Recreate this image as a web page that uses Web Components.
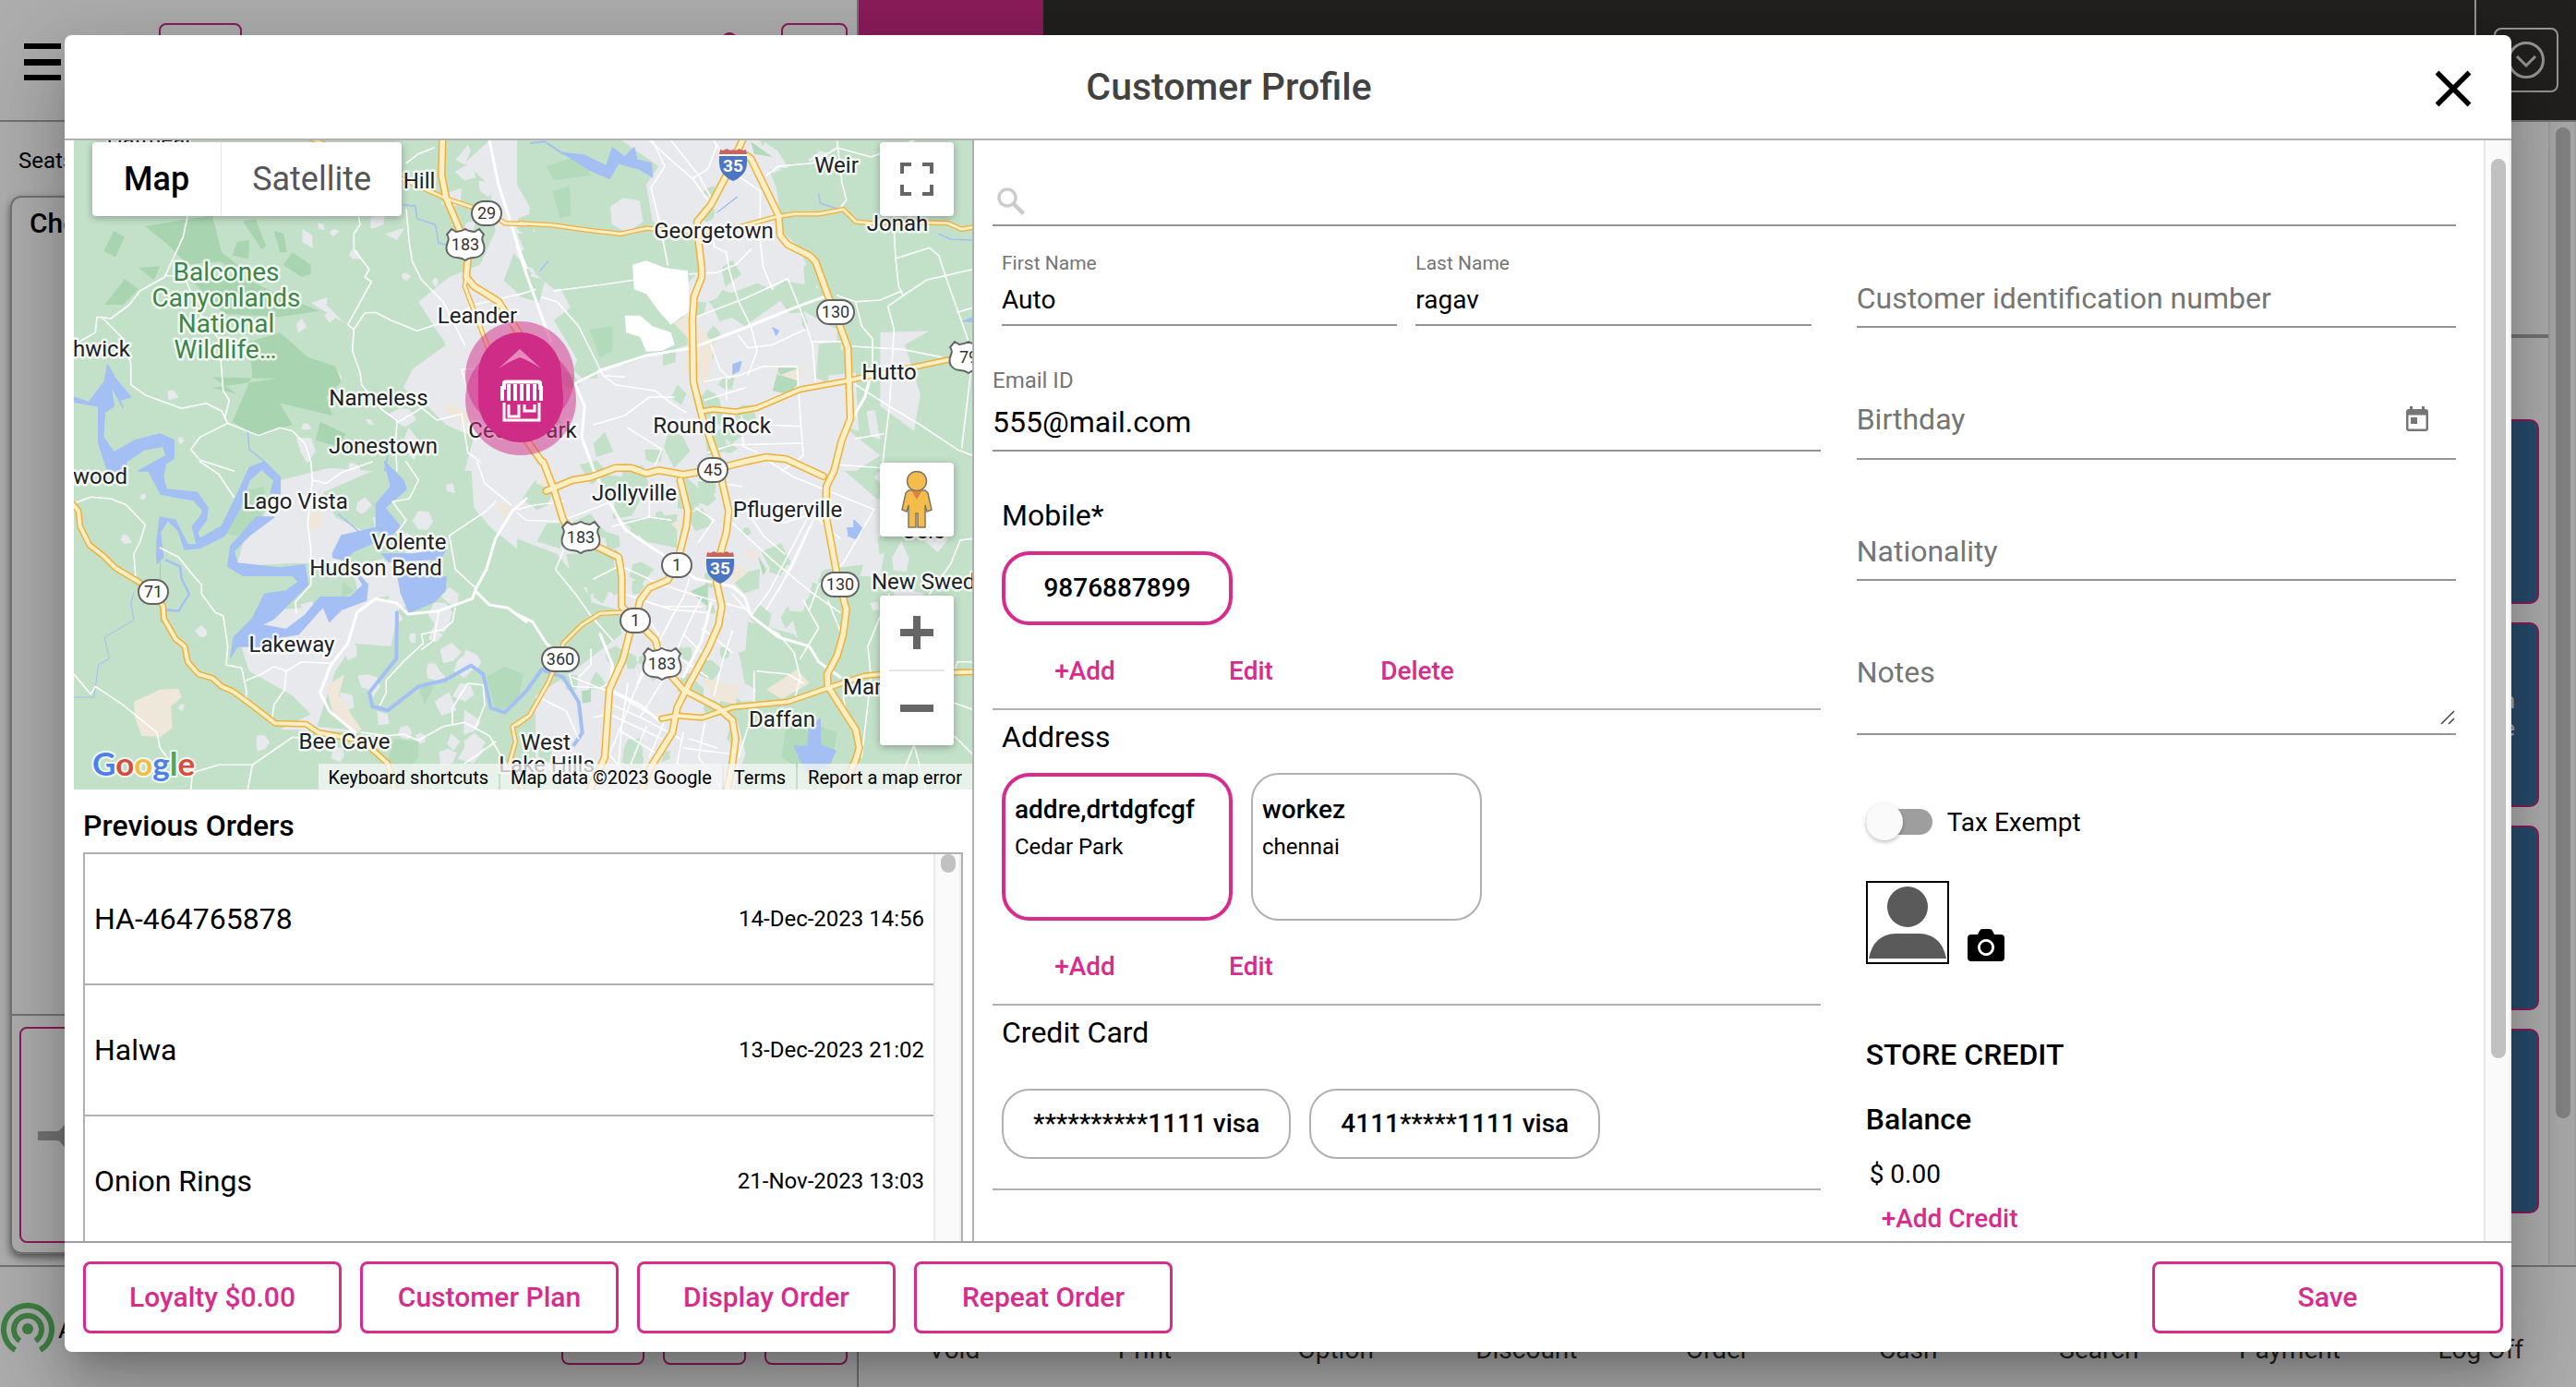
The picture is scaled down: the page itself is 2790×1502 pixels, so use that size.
<!DOCTYPE html>
<html lang="en">
<head>
<meta charset="utf-8">
<title>Customer Profile</title>
<style>
html,body{margin:0;height:100%}
body{font-family:Roboto,"Liberation Sans",sans-serif;font-size:28px;color:#000;background:#fff;overflow:hidden;
 --pink:#d92b8c;--line:#b0b0b0;--field:#949494;--muted:#757575}
</style>
</head>
<body>
<pos-screen>
  <pos-shell></pos-shell>
  <customer-dialog slot="dialog"></customer-dialog>
</pos-screen>
<script>
function define(name, css, html){
  customElements.define(name, class extends HTMLElement{
    connectedCallback(){
      if(this.shadowRoot) return;
      const root=this.attachShadow({mode:'open'});
      const t=document.createElement('template');
      t.innerHTML='<style>*{box-sizing:border-box}button,input,textarea{font:inherit;color:inherit;margin:0;padding:0;border:0;background:none;outline:0}button{cursor:pointer}'+css+'</style>'+(typeof html==='function'?html(this):html);
      root.appendChild(t.content.cloneNode(true));
    }
  });
}

define('pos-screen',`
:host{display:grid;height:100vh;overflow:hidden}
.page,.overlay{grid-area:1/1;min-width:0;min-height:0}
.overlay{z-index:1;background:rgba(0,0,0,.32);display:flex;padding:38px 70px}
::slotted(customer-dialog){flex:1}
`,`<div class="page" style="display:grid"><slot></slot></div><div class="overlay"><slot name="dialog"></slot></div>`);

define('blue-tile',`
:host{display:flex;justify-content:flex-end;align-items:center;width:300px;height:200px;flex:none;background:#3c70a0;border:2px solid #cc2a87;border-radius:10px;color:#fff;padding-right:24px;font-size:24px;line-height:30px;text-align:right}
`,`<slot></slot>`);

define('scroll-bar',`
:host{display:block;width:30px;flex:none;background:#fafafa;border-left:2px solid #e8e8e8;border-right:2px solid #ededed;padding:var(--top,0) 4px 0 6px}
i{display:block;width:16px;height:var(--size,100%);border-radius:8px;background:#c1c1c1}
`,`<i></i>`);

define('pos-shell',`
:host{display:grid;grid-template:132px 1fr 132px / 1fr 2fr;background:#fff;min-height:0;overflow:hidden}
.hl{display:flex;align-items:flex-start;padding:25px 10px 0 26px;border-bottom:2px solid #aaa;border-right:2px solid #aaa}
.burger{width:40px;height:40px;margin:22px 106px 0 0;border-top:6px solid #000;border-bottom:6px solid #000;display:flex;align-items:center}
.burger:before{content:"";height:7px;width:100%;background:#000}
.box{border:2px solid #cc2a87;border-radius:8px;height:80px;width:90px}
.box.s{width:72px;margin-left:48px}
.dot{width:16px;height:16px;border-radius:8px;background:#cc2a87;margin:10px 0 0 auto}
.hr{background:#32302e;display:flex;justify-content:space-between;border-bottom:2px solid #aaa}
.hr .tab{width:200px;background:#cc2a87}
.hr .end{width:110px;border-left:2px solid #ddd;padding:30px 0 0 19px}
.hr button{width:70px;height:70px;border:2px solid #ddd;border-radius:8px;display:grid;place-items:center}
.ml{padding:22px 0 12px 11px;display:flex;flex-direction:column;min-height:0}
.ml p{margin:0 0 18px 9px;font-size:24px;line-height:40px}
.card{flex:1;border:2px solid #aaa;border-radius:12px;box-shadow:0 4px 8px rgba(0,0,0,.5);display:flex;flex-direction:column}
.card h2{margin:8px 0 0 19px;font-size:30px;font-weight:500;line-height:40px}
.tray{margin-top:auto;border-top:2px solid #aaa;padding:12px 8px;height:258px}
.tray div{height:234px;width:400px;border:2px solid #cc2a87;border-radius:8px;padding:97px 18px}
.mr{display:flex;justify-content:flex-end;min-height:0}
.tiles{flex:1;display:flex;flex-direction:column;align-items:flex-end;gap:20px;padding-right:10px;min-height:0;overflow:hidden}
.rule{height:4px;flex:none;align-self:stretch;background:#aaa;margin:230px -10px 68px 0}
.fl{border-top:2px solid #aaa;border-right:2px solid #aaa;display:flex;align-items:flex-start;gap:20px;padding:0 10px 0 1px}
.fl .sig{margin-top:38px;display:flex;align-items:center;gap:4px;margin-right:auto}
.fl .box{width:90px;height:82px;margin-top:24px}
.fr{border-top:2px solid #aaa;display:grid;grid-template-columns:repeat(9,1fr);text-align:center;line-height:36px;padding-top:72px;color:#333}
`,`
<div class="hl"><span class="burger"></span><span class="box"></span><span class="dot"></span><span class="box s"></span></div>
<div class="hr"><span class="tab"></span><span class="end"><button aria-label="More"><svg width="42" height="42" viewBox="0 0 42 42" fill="none" stroke="#ddd" stroke-width="3"><circle cx="21" cy="21" r="18.500"/><path d="M11 17l10 10 10-10"/></svg></button></span></div>
<div class="ml"><p>Seats</p><section class="card"><h2>Check</h2><div class="tray"><div><svg width="60" height="40" viewBox="0 0 60 40" fill="#aaa"><path d="M0 14h20q4 0 8-6l8-8h10v36H34q-6-6-8-8-2-4-6-4H0z"/></svg></div></div></section></div>
<div class="mr"><div class="tiles"><span class="rule"></span><blue-tile></blue-tile><blue-tile>n<br>e</blue-tile><blue-tile></blue-tile><blue-tile></blue-tile></div><scroll-bar style="--top:6px;--size:1073px"></scroll-bar></div>
<div class="fl"><span class="sig"><svg width="58" height="58" viewBox="0 0 58 58" fill="none" stroke="#5dbb63" stroke-width="6"><circle cx="29" cy="29" r="6" fill="#5dbb63" stroke="none"/><path d="M20.500 42A15 15 0 1 1 37.500 42M15.500 52A26 26 0 1 1 42.500 52"/></svg>A</span><span class="box"></span><span class="box"></span><span class="box"></span></div>
<div class="fr"><span>Void</span><span>Print</span><span>Option</span><span>Discount</span><span>Order</span><span>Cash</span><span>Search</span><span>Payment</span><span>Log Off</span></div>
`);

/* ---- Map drawing. Survey sheets 1-4 are three times map scale; [sheet, points] lists are moved onto one plane. ---- */
const SHEET={1:[70,140],2:[560,140],3:[70,500],4:[560,500]};
function trace(s){
  return s.split('|').map(part=>{
    let d='',first=true,o=SHEET[1];
    for(const tok of part.trim().split(/\s+/)){
      if(/^\d:$/.test(tok)){o=SHEET[tok[0]];continue}
      const [x,y]=tok.split(',').map(Number);
      d+=(first?'M':'L')+(o[0]+x/3).toFixed(1)+' '+(o[1]+y/3).toFixed(1);first=false;
    }
    return d;
  }).join('');
}
const area=(s,fill,w)=>`<path fill="${fill}" ${w?`stroke="${fill}" stroke-width="${w}" stroke-linejoin="round"`:''} d="${trace(s.replace(/\|/g,'|'))}"/>`;
const line=(s,c,w)=>`<path fill="none" stroke="${c}" stroke-width="${w}" stroke-linecap="round" stroke-linejoin="round" d="${trace(s)}"/>`;
let seed=7;const rnd=()=>(seed=(seed*16807)%2147483647)/2147483647;
function patches(n,x,y,w,h,size,fill){
  let d='';
  for(let i=0;i<n;i++){
    const cx=x+rnd()*w,cy=y+rnd()*h,r=size*(.5+rnd()),k=4+Math.floor(rnd()*3),a0=rnd()*6;
    for(let j=0;j<k;j++){const a=a0+j*6.283/k,q=r*(.5+rnd()*.7);d+=(j?'L':'M')+(cx+Math.cos(a)*q).toFixed(1)+' '+(cy+Math.sin(a)*q*1.1).toFixed(1)}
    d+='Z';
  }
  return `<path fill="${fill}" d="${d}"/>`;
}
const G='#c3e1c9',U='#e8e9ed',D='#a9d4b0',W='#a3bff4',B='#efe7d9';
function mapArt(){
  let s='';
  s+=area('1: 1380,36 1300,110 1380,180 1400,330 1350,440 1250,480 1150,560 1200,640 1240,700 1130,780 1100,840 1180,900 1240,960 1330,1000 1300,1110 2: 100,1110 560,1110 560,940 430,880 340,760 240,700 120,480 60,340 40,250 0,180 0,36',U);
  s+=area('2: 340,36 790,36 830,160 900,330 940,440 830,520 900,620 980,700 970,820 1090,860 1080,980 1180,1060 1100,1110 300,1110 200,820 420,740 560,700 520,520 600,450 570,340 440,300 420,180 460,120',U);
  s+=area('3: 1320,0 1500,0 4: 1030,0 1180,130 1160,330 1000,350 880,440 900,560 720,620 740,720 880,800 760,900 700,1070 180,1070 60,960 60,760 170,690 340,560 330,480 130,430 0,300 3: 1480,290 1390,220 1330,150',U);
  s+=area('3: 700,60 860,20 1000,30 840,100 880,180 1000,240 900,330 740,330 560,340 580,260 640,190|3: 560,560 700,480 860,470 990,440 1090,460 1060,600 940,590 880,680 820,860 1000,880 700,870 800,820 740,760 600,680|3: 930,330 1080,320 1100,430 960,450',U);
  s+=patches(34,640,170,400,260,13,U)+patches(36,620,430,420,270,14,U)+patches(34,330,400,180,290,10,U)+patches(24,340,690,180,130,10,U)+patches(16,320,180,210,200,9,U)+patches(8,90,420,220,400,6,U);
  s+=patches(14,700,180,110,300,12,G)+patches(22,580,400,220,180,14,G)+patches(20,560,700,240,130,10,G)+patches(12,560,190,90,150,16,G)+patches(20,740,560,150,240,11,G)+patches(14,620,560,80,100,10,G);
  s+=area('2: 0,340 100,330 330,345 560,340 560,420 440,460 300,500 120,520 60,470|2: 200,560 340,600 420,740 220,790 120,620|2: 620,560 780,500 880,540 740,640|2: 840,160 1100,36 1480,36 1480,1110 1200,1110 1160,900 1050,690 980,520 930,400 860,330|4: 160,300 310,290 330,430 180,400|4: 340,190 520,170 520,280 420,260|4: 750,520 900,560 1000,700 820,740 740,640|4: 700,780 1000,770 1060,880 1010,1070 780,1070 740,940|4: 0,250 130,300 240,440 250,600 60,660 0,700',G);
  s+=area('2: 1180,660 1340,655 1260,700 1310,860 1290,980 1180,900|2: 1010,800 1100,790 1110,980 1040,960|2: 930,590 1040,650 1040,690 970,700|4: 1170,230 1180,330 1120,300|2: 900,430 920,420 915,470|1: 1270,100 1310,50 1320,70 1300,115|1: 1410,115 1450,105 1465,130 1450,170 1415,175|1: 1040,340 1105,320 1080,360|1: 800,565 855,545 850,570 910,630',U);
  s+=area('1: 260,315 480,280 510,400 600,470 500,430 400,440 330,370|1: 160,330 195,350 165,415 127,395|1: 580,300 620,290 655,380 640,390|1: 680,330 712,340 722,400 700,400|1: 740,400 800,440 800,470 770,480 710,440|1: 195,487 240,520 190,570 130,570|1: 545,410 560,365 600,360 598,420|1: 420,500 560,470 700,540 830,590 700,610 520,600|1: 600,690 700,660 790,740 880,770 900,820 850,870 870,930 700,890 740,960 690,975 630,1000 545,950 610,800|1: 690,810 480,805 560,860 480,840|1: 830,950 915,990 885,1030 815,1010|1: 240,450 310,445 290,490',D);
  s+=area('2: 95,120 200,85 240,150 120,165|2: 115,200 170,185 175,280 140,290|2: 235,650 310,640 310,720 270,740|2: 760,40 830,90 770,80|2: 850,775 910,775 910,830 880,860 830,850|4: 565,420 620,395 620,470 600,455|4: 210,745 240,740 240,780 212,785|3: 560,100 650,80 640,190 560,240 500,230|3: 1370,700 1430,665 1490,690 1470,790 1400,810|3: 1070,900 1150,910 1150,960 1110,1010 1050,970|3: 905,390 940,420 900,440|4: 880,820 1040,880 1010,1060 860,960|4: 780,300 810,350 800,370|3: 1150,730 1200,730 1170,790','#b2dabb');
  s+=area('3: 225,780 310,740 370,738 380,765 345,795 350,865 310,895 250,890 228,830|3: 850,730 910,690 890,760 965,870 940,880 870,810|3: 790,165 838,165 830,220 790,215|2: 510,630 560,600 640,700 620,830 590,820 545,790 555,680|4: 810,740 910,675 950,720 860,770|4: 600,700 720,730 710,790 640,770|4: 700,320 750,360 700,400|4: 740,270 790,310 760,320|2: 830,770 850,800 930,770 920,820 860,800|4: 60,70 130,20 110,90|4: 500,200 560,180 550,250|1: 1250,890 1320,930 1300,960 1230,910|3: 1400,130 1450,150 1430,190',B);
  s+=area('2: 375,440 420,427 480,450 555,460 560,590 500,635 460,590 420,535 380,520|2: 350,605 400,605 440,640 500,660 512,700 470,720 420,722 400,675 355,660','#fff');
  /* lakes and creeks */
  s+=area('1: 80,885 130,820 140,765 165,810 215,870 180,880 190,905 150,830 160,900 130,920 125,1000 160,1050 230,1010 310,990 355,1010 355,1070 290,1110 240,1110 330,1060 320,1030 260,1040 200,1080 200,1110 140,1110 110,1020 110,900 30,885 30,868|2: 140,75 220,85 290,120 310,60 350,90 380,60 390,100 435,110 440,155 400,130 330,110 300,160 230,130|3: 270,30 330,0 320,50 330,90 430,100 465,150 460,190 430,230 440,250 510,210 560,110 600,20 650,0 700,50 700,105 670,100 680,60 640,25 600,60 570,150 520,240 440,280 390,285 370,225 335,190 310,230 320,310 300,330 300,260 310,180 360,190 400,270 430,270 415,210 440,180 450,160 420,125 310,105|3: 620,180 680,180 600,240 550,290 560,330 700,345 780,335 790,400 740,450 680,510 640,530 720,545 780,500 830,440 930,440 970,400 940,350 985,400 980,450 900,480 860,520 840,470 760,560 700,570 640,600 560,600 540,635 550,570 610,510 650,430 720,420 760,390 740,370 580,370 530,340 540,270|3: 870,300 900,240 1010,215 1010,260 940,290 910,320 870,310|3: 1010,140 1060,80 1040,0 1100,60 1110,90 1040,150 1090,210 1060,240 1010,220|3: 1080,370 1240,375 1235,420 1200,455 1120,490 1090,420|3: 1030,300 1130,300 1240,285 1220,315 1050,325|4: 900,925 945,925 950,870 985,835 985,920 1035,940 1015,980 950,1010 915,960|4: 1072,215 1095,215 1095,190 1125,220 1100,250 1075,240|2: 700,765 728,755 720,785 700,795|2: 830,645 850,655 840,670|2: 1450,625 1480,612 1480,628',W,1.5);
  s+=line('3: 225,425 215,460 225,515 130,570 145,640 110,660 95,765 30,765',W,1)+line('3: 330,320 375,340 380,380 405,430 370,485 320,480',W,2.5)+line('3: 1080,490 1078,640 990,750 1000,795 1050,808 1150,730 1235,710 1320,662 1360,690 1385,800 1430,815 1500,745 4: 80,675 150,700 200,780 212,880 185,920',W,4)+line('3: 310,320 313,520',W,1)+line('2: 45,45 90,40 150,80',W,2)+line('2: 715,220 650,270|2: 75,460 100,430|2: 980,210 985,240 1060,265|2: 1370,340 1410,358 1480,360|1: 1100,245 1140,250 1145,290 1205,310 1215,370 1240,375|1: 595,980 600,1040 650,1080|1: 1040,1110 1050,1060|3: 890,170 960,230',W,1.5);
  /* minor roads */
  const minor=[
  '1: 400,280 385,350 325,480 245,525 210,570 150,615 105,610 100,660 30,700','1: 325,475 390,480 410,530 440,600 500,680 510,780 515,850 535,880 520,940','1: 120,610 190,680 215,760 215,830 265,865 380,907 460,890 510,915 530,955 630,995 700,970 740,980 780,1020 800,1080','1: 530,955 440,1000 410,1040 440,1075 550,1110','1: 955,280 960,310 940,340 940,390 990,455 975,480 997,495 920,635 940,650','1: 1110,260 1120,370 1130,430 1160,490 1230,560 1300,700','1: 940,650 935,720 960,790 965,830 1030,910 1085,950 1160,905 1210,945 1290,925 1310,1050 1350,1080','1: 940,650 975,597 1010,595 1060,620 1145,655 1250,620 1330,570 1500,530','1: 1500,770 1290,780 1310,850','1: 1080,950 1075,1020 1080,1110','1: 1110,110 1150,80 1200,60',
  '3: 440,0 500,40 550,115','3: 30,135 85,115 150,120 200,140 262,205 245,260 225,300 230,370','3: 310,280 370,310 410,360 445,400 445,430 475,470 490,490 515,500 530,600 525,660 575,670 590,740 590,780','3: 800,0 805,60 790,200 800,280 800,400 750,455 753,490','3: 805,60 850,70 900,35 1000,0','3: 590,710 640,690 680,665 720,680 770,650 860,655','3: 720,680 715,740 680,790 675,830','3: 30,690 85,755 100,730 190,790 300,880 310,930 340,970','3: 410,1065 415,1010 500,985 610,985 690,930 740,895 790,900','3: 595,1065 610,985','3: 965,880 1050,890 1100,885 1150,905 1230,860 1300,847 1380,890 1420,960 1450,1010','3: 1270,475 1260,520 1230,545 1160,560 1165,590 1100,650 1045,710 1045,750 1025,790','3: 1215,490 1200,580 1160,610','3: 1260,855 1260,800 1310,720 1360,725 1365,790 1335,865','3: 1335,410 1270,350 1250,240 1370,160 1400,130','3: 1110,0 1150,60 1120,120 1065,130 1110,190 1080,230','3: 1300,980 1400,910','3: 1340,0 1365,70 1450,140',
  '2: 440,36 480,120 435,190 460,290 490,440','2: 430,36 500,100 570,160 620,230','2: 500,36 590,150 640,240','2: 640,36 700,140 790,200 790,360 800,450 830,520','2: 570,160 620,130 650,50','2: 810,150 850,120 960,110 1040,60 1150,90 1290,36','2: 1040,40 1055,170 1070,230 1050,255','2: 1225,330 1230,420 1240,510 1255,540 1205,575 1225,650 1210,900 1185,1110','2: 1230,420 1340,385 1370,410 1400,500 1450,640 1470,700','2: 1255,540 1330,490 1480,455','2: 1100,560 1180,555 1250,525','2: 1430,595 1480,580','2: 640,320 640,380 680,400 690,460 720,560 760,640 780,720 750,800','2: 560,470 650,465 710,440 760,390','2: 580,610 740,550 880,485 930,610 960,700 970,820','2: 120,525 310,500 440,480','2: 80,545 130,560 200,640 240,720 280,800 350,805','2: 0,540 60,520','2: 280,800 320,830 450,850 500,890 550,920','2: 250,960 350,930 430,870 510,870','2: 360,970 470,1040 450,1090','2: 610,820 680,805 720,800 800,770 910,770 920,930 930,1060 860,1110','2: 680,805 680,880','2: 610,880 740,840','2: 630,700 660,780 690,810','2: 720,670 750,710 830,700 935,650','2: 730,930 735,1030 780,1050','2: 620,1050 700,1025 930,1020','2: 810,960 920,965','2: 1040,540 1100,560 1120,640 1155,680 1155,800','2: 960,690 1060,690','2: 1090,705 1250,715 1380,740','2: 1100,830 1210,900 1310,960 1430,1040 1480,1060','2: 1480,740 1445,1035','2: 1100,1005 1190,990','2: 1040,1090 1190,1100',
  '4: 0,155 60,140 150,130','4: 150,190 280,140 430,90','4: 0,165 30,190 150,195','4: 310,210 430,180 500,190','4: 150,290 125,350 190,430 240,500 310,580','4: 350,345 470,400 600,440 750,480','4: 250,380 330,340','4: 350,430 500,480 620,490','4: 380,440 470,470 600,470','4: 600,440 560,520 480,700 400,830','4: 510,490 380,750 350,830 300,950','4: 420,500 460,560 390,720','4: 560,380 540,440 430,640','4: 700,200 830,320 950,420 1050,490','4: 740,150 800,240 870,300','4: 750,130 860,200 960,170 1050,250','4: 820,0 900,50 1160,155','4: 940,190 820,420 760,500','4: 980,150 900,330 810,480','4: 950,210 850,420','4: 1160,155 1060,330 980,400 950,480','4: 700,430 780,520 850,560 900,620 920,700 900,780','4: 930,450 980,540 920,640','4: 700,550 670,640 640,760','4: 1010,450 1050,550','4: 770,680 770,800 720,960','4: 780,680 880,690 930,720','4: 1480,250 1440,255 1410,330 1340,430','4: 1210,430 1140,600 1150,700','4: 1060,760 1075,850','4: 1150,700 1120,960','4: 1410,780 1480,805','4: 1420,890 1480,950','4: 1290,920 1230,1070','4: 1290,920 1330,1070','4: 1425,670 1430,650 1480,650','4: 170,690 180,730 270,735 300,720','4: 240,610 240,660 200,700','4: 80,770 160,810 200,900','4: 360,720 340,860 330,980','4: 250,830 300,820 470,900','4: 310,790 420,840 530,900','4: 330,870 470,960','4: 420,860 370,980','4: 480,840 430,960','4: 540,880 520,980 600,1040','4: 560,900 650,930','4: 610,850 590,960 660,1060','4: 540,930 700,950','4: 300,950 380,1050','4: 180,700 330,760 450,830','4: 540,560 620,640','4: 470,600 620,700','4: 600,540 700,620','4: 580,150 640,190 590,260','4: 430,90 430,180','4: 590,60 730,80'];
  s+=minor.map(p=>line(p,'#fff',1.6)).join('');
  const mid=['1: 1380,36 1410,180 1445,290 1480,400 1500,450 2: 0,380 30,470 70,580 110,690','2: 190,825 280,780 420,735 570,710 740,645 900,580 1010,540','2: 190,830 220,900 210,1000 250,1110 4: 300,130 350,220 470,300 580,380 700,405 740,440 760,500 850,570 950,600 980,650 1050,700','3: 1500,120 1455,160 1400,250 1370,350 1335,415 1325,445 1215,485 1115,495 1080,460 1010,445 950,490 920,590 865,660 830,750 860,810 945,880','3: 1335,420 1380,465 1440,475 1500,520 4: 0,495 50,520 95,590 150,640','4: 630,460 600,580 540,700','2: 1155,780 1130,870 1090,940','4: 270,560 310,660 300,740 400,790 460,840'];
  s+=mid.map(p=>line(p,'#fff',3)).join('');
  /* highways */
  const narrow=['1: 1095,160 1240,225 1330,255 1390,275 1430,305 1500,308 2: 10,305 120,312 230,328 335,340 420,322 600,335 730,315 840,285 900,275 980,275 1060,260 1080,280 1100,300 1150,305 1250,300 1400,305 1445,325 1485,318','4: 340,490 270,493 210,530 150,590 135,640 100,720 40,825 0,855','3: 1500,830 1455,860 1465,910 1445,980 1490,1070','1: 1305,480 1300,510 1380,720','1: 800,30 850,50'];
  const wide=['2: 735,30 680,150 630,245 585,300 588,350 600,450 600,480 575,545 570,620 573,820 600,930 650,1070 4: 665,60 688,160 680,230 660,300 648,390 665,470 655,530 620,610 560,720 520,800 505,880 430,1000 400,1080','2: 745,85 760,95 850,280 855,345 880,375 950,410 970,430 1010,540 1035,600 1075,710 1083,940 1055,1010 1030,1110 4: 1005,80 1003,170 1040,370 1070,480 1060,560 1040,630 1008,690 1010,730 1100,870 1112,930 1100,970 1050,1080','1: 1228,30 1225,150 1240,225 1285,330 1310,420 1305,480 1330,510 1410,560 1500,700 2: 30,760 10,980 80,1080 4: 85,0 120,90 150,190 205,250 330,310 340,370 340,470 385,515 450,580 470,660 540,740 655,800 700,840 710,900 700,980 680,1080','2: 605,915 640,910 710,917 780,905 920,845 1060,820 1150,800 1300,770 1420,745','4: 95,95 180,60 240,50 320,20 370,20 420,38 460,28 540,42 640,25 740,0 810,-15 875,-8 995,47','4: 530,60 555,160 550,210 530,290 515,335 490,385 430,410 400,450 385,515 365,560 345,640 300,740 285,960 230,1080','4: 470,835 520,825 600,832 650,815 700,797 880,780 1010,735 1130,695 1190,690 1500,683','3: 20,130 45,160 50,210 80,270 130,310 165,345 240,390 300,440 320,470 323,510 360,575 390,600 400,650 435,690 480,703 510,730 545,745 600,785 685,850 785,853 825,880 960,905 1000,935 1050,980 1075,1080'];
  s+=narrow.map(p=>line(p,'#eeb03c',5.5)).join('')+wide.map((p,i)=>line(p,'#eeb03c',i===7||i===3||i===6?7:8.5)).join('');
  s+=narrow.map(p=>line(p,'#fdeec3',3)).join('')+wide.map((p,i)=>line(p,'#fdeec3',i===7||i===3||i===6?4:5.5)).join('');
  return s;
}
const pill=(x,y,w,t)=>`<g transform="translate(${x} ${y})"><rect x="${-w/2}" y="-13" width="${w}" height="26" rx="13" fill="#fff" stroke="#646464" stroke-width="2"/><text y="6" text-anchor="middle" class="n">${t}</text></g>`;
const us=(x,y,t)=>`<g transform="translate(${x} ${y})"><path d="M-15-16l5 3q5 0 10-3 5 3 10 3l5-3 5 6q-3 4-1 8 3 7 0 12-4 5-10 5-5 0-9 3-4-3-9-3-6 0-10-5-3-5 0-12 2-4-1-8z" fill="#fff" stroke="#646464" stroke-width="2"/><text y="7" text-anchor="middle" class="n">${t}</text></g>`;
const inter=(x,y)=>`<g transform="translate(${x} ${y})"><path d="M-14-16q4 2 7-1 4 3 7 1 3 2 7-1 3 3 7 1l1 5h-30z" fill="#c9635f"/><path d="M-15-9h30q1 14-4 19-4 5-11 8-7-3-11-8-5-5-4-19z" fill="#4a76c5"/><path d="M-15-10h30" stroke="#fff" stroke-width="2"/><text y="8" text-anchor="middle" class="i">35</text></g>`;
const town=(x,y,t,a)=>`<text x="${x}" y="${y}" ${a?'':'text-anchor="middle"'}>${t}</text>`;

define('map-view',`
:host{display:grid;overflow:hidden;height:703px;flex:none}
.art{grid-area:1/1;width:100%;height:100%;display:block}
.art text{font-size:24px;fill:#202124;stroke:#fff;stroke-opacity:.8;stroke-width:5px;stroke-linejoin:round;paint-order:stroke}
.art text.park{font-size:28px;fill:#3f8548}
.art text.n{font-size:18px;fill:#333;stroke:none}
.art text.i{font-size:19px;font-weight:700;fill:#fff;stroke:none}
.art text.logo{font-family:Lato,sans-serif;font-weight:700;font-size:35px;stroke-width:4px}
.over{grid-area:1/1;z-index:1;display:grid;grid-template:1fr auto/auto 1fr auto;padding-top:2px;min-height:0}
.types{display:flex;align-self:start;margin-left:20px;border-radius:4px;box-shadow:0 2px 8px rgba(0,0,0,.3);background:#fff}
.types button{height:80px;padding:0 34px;font-size:36px;font-weight:500}
.types button+button{font-weight:400;color:#565656;border-left:1px solid #e4e4e4;padding:0 33px}
.side{grid-column:3;display:flex;flex-direction:column;margin-right:20px;padding-bottom:20px}
.side button,.zoom{width:80px;height:80px;background:#fff;border-radius:4px;display:grid;place-items:center}
.side>button,.zoom{box-shadow:0 2px 8px rgba(0,0,0,.3)}
.side>:nth-child(2){margin-top:auto}
.zoom{height:162px;margin-top:64px;grid-template-rows:80px 2px 80px}
.zoom i{width:60px;height:2px;background:#e6e6e6}
.legal{grid-column:1/4;justify-self:end;display:flex;gap:2px;height:28px}
.legal>*{font-size:20px;line-height:30px;padding:0 11px;background:rgba(245,245,245,.75);color:#000;text-decoration:none;white-space:nowrap}
`,()=>`
<svg class="art" viewBox="80 152 973 703" preserveAspectRatio="xMidYMid slice" role="img" aria-label="Map of the Austin area">
<rect x="80" y="152" width="973" height="703" fill="${G}"/>${mapArt()}
${town(161,159,'Oatmeal')}${town(454,204,'Hill')}${town(517,350,'Leander')}${town(79,386,'hwick',1)}${town(410,439,'Nameless')}${town(415,491,'Jonestown')}
${town(773,258,'Georgetown')}${town(906,187,'Weir')}${town(972,250,'Jonah')}${town(963,411,'Hutto')}${town(771,469,'Round Rock')}${town(566,474,'Cedar Park')}
${town(79,524,'wood',1)}${town(320,551,'Lago Vista')}${town(443,595,'Volente')}${town(407,623,'Hudson Bend')}${town(316,706,'Lakeway')}${town(373,811,'Bee Cave')}
${town(687,542,'Jollyville')}${town(853,560,'Pflugerville')}${town(1000,583,'Cele')}${town(944,638,'New Sweden',1)}${town(913,752,'Manor',1)}${town(847,787,'Daffan')}${town(591,812,'West')}${town(592,836,'Lake Hills')}
<text class="park" text-anchor="middle"><tspan x="245" y="304">Balcones</tspan><tspan x="245" y="332">Canyonlands</tspan><tspan x="245" y="360">National</tspan><tspan x="244" y="388">Wildlife…</tspan></text>
${pill(527,231,32,'29')}${us(504,264,'183')}${inter(794,178)}${pill(905,338,40,'130')}${us(1049,386,'79')}${pill(772,509,32,'45')}${us(629,581,'183')}${pill(733,612,32,'1')}${inter(780,614)}${pill(910,633,40,'130')}${pill(688,672,32,'1')}${pill(607,714,40,'360')}${us(717,718,'183')}${pill(166,641,32,'71')}
<g fill="#cf2c88"><circle cx="563" cy="407" r="59" opacity=".5"/><circle cx="564" cy="433" r="60" opacity=".5"/><circle cx="563" cy="405" r="45"/><circle cx="564" cy="433" r="46"/><path d="M518 405h90l2 28h-92z"/></g>
<path d="M540 399l23-21 23 21q-12-8-23-12-11 4-23 12z" fill="#e58abb"/>
<g fill="none" stroke="#fff" stroke-width="3"><path d="M546 422v-7q0-1.500 2-1.500h35q2 0 2 1.500v7M544 418v16M551 416v18M558 416v18M565 416v18M572 416v18M579 416v18M586 418v16" stroke-width="4"/><path d="M546 436v19h38v-19M551 438v13h11v-13M568 438v7h11v-7"/></g>
<text class="logo" x="100" y="840"><tspan fill="#4d80ee">G</tspan><tspan fill="#d84c3e">o</tspan><tspan fill="#f0bd42">o</tspan><tspan fill="#4d80ee">g</tspan><tspan fill="#55a458">l</tspan><tspan fill="#d84c3e">e</tspan></text>
</svg>
<div class="over">
<div class="types"><button>Map</button><button>Satellite</button></div>
<div class="side">
<button aria-label="Full screen"><svg width="36" height="36" viewBox="0 0 36 36" fill="none" stroke="#666" stroke-width="4"><path d="M2 12V2h10M24 2h10v10M34 24v10H24M12 34H2V24"/></svg></button>
<button aria-label="Street View"><svg width="36" height="62" viewBox="0 0 36 62" fill="#f4bd4b" stroke="#7d7566" stroke-width="1.500"><path d="M9 21h18l3 3 4 18-5 2-2-7v24h-8V46h-2v15H9V37l-2 7-5-2 4-18z"/><path d="M12 21h12l-6 10z" fill="#dd8540" stroke="none"/><circle cx="18" cy="11" r="10.500"/></svg></button>
<div class="zoom"><button aria-label="Zoom in"><svg width="36" height="36" viewBox="0 0 36 36" fill="#666"><path d="M14 0h8v14h14v8H22v14h-8V22H0v-8h14z"/></svg></button><i></i><button aria-label="Zoom out"><svg width="36" height="8" viewBox="0 0 36 8" fill="#666"><path d="M0 0h36v8H0z"/></svg></button></div>
</div>
<div class="legal"><a href="#keys">Keyboard shortcuts</a><span>Map data ©2023 Google</span><a href="#terms">Terms</a><a href="#report">Report a map error</a></div>
</div>`);

define('order-row',`
:host{display:flex;justify-content:space-between;align-items:center;height:142px;flex:none;padding:0 10px;border-bottom:2px solid var(--line);font-size:32px}
time{font-size:24px}
`,e=>`<span><slot></slot></span><time>${e.getAttribute('date')}</time>`);

define('order-list',`
:host{display:flex;flex:1;min-height:0;border:2px solid var(--line);border-bottom:0;overflow:hidden}
div{flex:1;display:flex;flex-direction:column;min-width:0}
`,`<div><slot></slot></div><scroll-bar style="--size:20px"></scroll-bar>`);

define('text-field',`
:host{display:flex;flex-direction:column;min-width:0;--h:60px}
label{font-size:21px;line-height:28px;color:var(--muted)}
:host([large]) label{font-size:24px}
.row{display:flex;align-items:center;border-bottom:2px solid var(--field)}
input,textarea{flex:1;min-width:0;width:100%;height:var(--h);font-size:28px;padding-bottom:var(--pb,0)}
:host([large]) input,textarea{font-size:32px}
textarea{line-height:36px;display:block;resize:none}
::placeholder{color:var(--muted);opacity:1}
.grip{align-self:flex-end;padding-bottom:8px}
`,e=>{
  const l=e.getAttribute('label')||'',f=e.hasAttribute('float'),p=f?'':l;
  const c=e.hasAttribute('multiline')
    ?`<textarea id="f" aria-label="${l}" placeholder="${p}"></textarea><svg class="grip" width="18" height="26" viewBox="0 0 18 18" stroke="#444" stroke-width="1.500"><path d="M2 16L16 2M10 16l6-6"/></svg>`
    :`<input id="f" ${f?'':`aria-label="${l}"`} placeholder="${e.hasAttribute('quiet')?'':p}" value="${e.getAttribute('value')||''}">`;
  return `${f?`<label for="f">${l}</label>`:''}<div class="row"><slot name="lead"></slot>${c}<slot name="icon"></slot></div>`;
});

define('link-button',`
:host{display:grid}
button{height:40px;padding:0 10px;color:var(--pink);font-weight:500;font-size:28px;line-height:40px}
`,`<button><slot></slot></button>`);

define('outline-button',`
:host{display:grid;width:280px}
:host([wide]){width:380px}
button{height:78px;border:3px solid var(--pink);border-radius:8px;color:var(--pink);font-weight:500;font-size:30px;padding-bottom:2px}
`,`<button><slot></slot></button>`);

define('choice-chip',`
:host{display:grid}
button{height:76px;padding:0 32px 2px;border:2px solid var(--line);border-radius:30px;font-weight:500;font-size:28px}
:host([selected]) button{width:250px;height:80px;padding:0 0 2px;border:4px solid var(--pink)}
`,`<button><slot></slot></button>`);

define('address-card',`
:host{display:grid}
button{width:250px;height:160px;border:2px solid var(--line);border-radius:30px;padding:18px 10px;display:flex;flex-direction:column;text-align:left;font-size:24px;line-height:40px}
:host([selected]) button{border:4px solid var(--pink);padding:16px 10px}
b{font-weight:500;font-size:28px}
`,`<button><b><slot name="title"></slot></b><span><slot></slot></span></button>`);

define('form-section',`
:host{display:block;padding:9px 10px 20px;border-bottom:2px solid var(--line)}
h3{margin:0 0 19px;font-weight:400;font-size:32px;line-height:40px}
.items{display:flex;gap:20px}
.links{display:grid;grid-template-columns:repeat(auto-fill,180px);margin-top:30px}
:host([plain]) .links{display:none}
:host([plain]) .items{padding:22px 0 12px}
`,e=>`<h3>${e.getAttribute('heading')}</h3><div class="items"><slot></slot></div><div class="links"><slot name="link"></slot></div>`);

define('toggle-switch',`
:host{display:block}
label{display:flex;align-items:center;gap:16px;height:40px;font-size:28px}
input{appearance:none;width:72px;height:28px;border-radius:14px;background:#9e9e9e;display:flex;align-items:center}
input:before{content:"";width:40px;height:40px;flex:none;border-radius:20px;background:#fafafa;box-shadow:0 2px 4px rgba(0,0,0,.25)}
`,`<label><input type="checkbox" role="switch"><slot></slot></label>`);

define('customer-form',`
:host{display:flex;min-width:0;min-height:0}
form{flex:1;min-width:0;padding:0 30px 0 20px;overflow:hidden}
.cols{display:grid;grid-template-columns:58fr 42fr;gap:39px}
.names{display:grid;grid-template-columns:1fr 1fr;gap:20px;padding:26px 10px 0}
.search{--h:91px}
.names text-field{--h:52px;--pb:2px}
.email{--h:61px;margin:45px 0 40px}
.photo{display:flex;align-items:flex-end;gap:20px;margin-top:44px}
.pic{width:90px;height:90px;border:2px solid #000}
.extra{padding-left:10px;margin-top:74px}
h3{margin:0;font-weight:500;font-size:32px;line-height:40px}
.extra p{margin:20px 0 8px 4px;line-height:40px}
.extra link-button{justify-content:start;padding-left:7px}
svg{display:block}
`,`
<form>
<text-field class="search" label="Search" quiet><svg slot="lead" style="margin:40px 20px 0 5px" width="30" height="30" viewBox="0 0 30 30" fill="none" stroke="#ccc"><circle cx="11" cy="11" r="9" stroke-width="3.500"/><path d="M18 18l10.500 10.500" stroke-width="4.500"/></svg></text-field>
<div class="cols">
<div>
<div class="names"><text-field float label="First Name" value="Auto"></text-field><text-field float label="Last Name" value="ragav"></text-field></div>
<text-field class="email" float large label="Email ID" value="555@mail.com"></text-field>
<form-section heading="Mobile*"><choice-chip selected>9876887899</choice-chip><link-button slot="link">+Add</link-button><link-button slot="link">Edit</link-button><link-button slot="link">Delete</link-button></form-section>
<form-section heading="Address"><address-card selected><span slot="title">addre,drtdgfcgf</span>Cedar Park</address-card><address-card><span slot="title">workez</span>chennai</address-card><link-button slot="link">+Add</link-button><link-button slot="link">Edit</link-button></form-section>
<form-section plain heading="Credit Card"><choice-chip>**********1111 visa</choice-chip><choice-chip>4111*****1111 visa</choice-chip></form-section>
</div>
<div>
<text-field large style="margin-top:48px" label="Customer identification number"></text-field>
<text-field large style="margin-top:57px;--h:84px" label="Birthday"><svg slot="icon" style="margin-right:30px" width="24" height="28" viewBox="0 0 24 28" fill="#757575"><path fill-rule="evenodd" d="M4 0h3v3h10V0h3v3h1q3 0 3 3v18q0 3-3 3H3q-3 0-3-3V6q0-3 3-3h1zM2.500 9.500v15h19v-15zM5 12h7v7H5z"/></svg></text-field>
<text-field large style="margin-top:69px" label="Nationality"></text-field>
<text-field large multiline style="margin-top:81px;--h:84px" label="Notes"></text-field>
<div class="extra">
<toggle-switch>Tax Exempt</toggle-switch>
<div class="photo"><span class="pic"><svg width="86" height="86" viewBox="0 0 86 86" fill="#5a5a5a"><ellipse cx="43" cy="26" rx="22" ry="22"/><path d="M1 82Q6 56 30 55h26q24 1 29 27z"/></svg></span><svg width="40" height="38" viewBox="0 0 40 38"><path fill-rule="evenodd" d="M11 6l2-4q1-2 3-2h8q2 0 3 2l2 4h7q4 0 4 4v21q0 4-4 4H4q-4 0-4-4V10q0-4 4-4zM20 11a9 9 0 1 0 .1 0z"/><circle cx="20" cy="20" r="6.200"/></svg></div>
<h3 style="margin-top:78px">STORE CREDIT</h3>
<h3 style="margin-top:30px">Balance</h3>
<p>$ 0.00</p>
<link-button>+Add Credit</link-button>
</div>
</div>
</div>
</form>
<scroll-bar style="--top:20px;--size:974px"></scroll-bar>
`);

define('customer-dialog',`
:host{display:flex;flex-direction:column;min-width:0;background:#fff;border-radius:8px;overflow:hidden;box-shadow:0 22px 30px -14px rgba(0,0,0,.2),0 48px 76px 6px rgba(0,0,0,.14),0 18px 92px 16px rgba(0,0,0,.12)}
header{height:114px;flex:none;display:flex;align-items:center;border-bottom:2px solid var(--line)}
h1{flex:1;text-align:center;margin:0;padding-right:45px;font-size:41px;font-weight:500;color:#424242}
header button{margin:4px 43px 0 0;width:40px;height:40px}
main{flex:1;min-height:0;display:grid;grid-template:minmax(0,1fr)/197fr 333fr}
.left{display:flex;flex-direction:column;min-width:0;min-height:0;padding-left:10px;border-right:2px solid var(--line)}
h2{margin:19px 10px 9px;font-size:32px;font-weight:500;line-height:40px}
order-list{margin:0 10px}
footer{flex:none;display:flex;gap:20px;padding:20px 9px 20px 20px;border-top:2px solid #a0a0a0}
footer [wide]{margin-left:auto}
`,`
<header><h1>Customer Profile</h1><button aria-label="Close"><svg width="40" height="40" viewBox="0 0 40 40" stroke="#000" stroke-width="5.500"><path d="M2.500 2.500l35 35M37.500 2.500l-35 35"/></svg></button></header>
<main>
<section class="left"><map-view></map-view><h2>Previous Orders</h2>
<order-list><order-row date="14-Dec-2023 14:56">HA-464765878</order-row><order-row date="13-Dec-2023 21:02">Halwa</order-row><order-row date="21-Nov-2023 13:03">Onion Rings</order-row></order-list></section>
<customer-form></customer-form>
</main>
<footer><outline-button>Loyalty $0.00</outline-button><outline-button>Customer Plan</outline-button><outline-button>Display Order</outline-button><outline-button>Repeat Order</outline-button><outline-button wide>Save</outline-button></footer>
`);
</script>
</body>
</html>
